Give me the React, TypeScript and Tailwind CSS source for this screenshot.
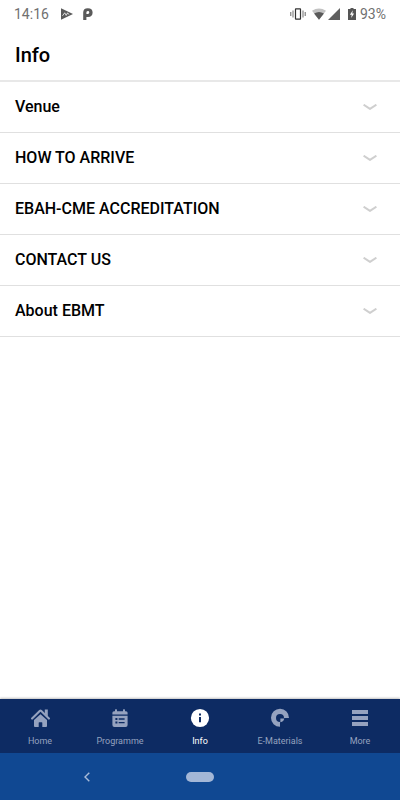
import { useState } from 'react';
import type { ReactNode } from 'react';
import clsx from 'clsx';

const sections = ['Venue', 'HOW TO ARRIVE', 'EBAH-CME ACCREDITATION', 'CONTACT US', 'About EBMT'];

function HomeIcon() {
  return (
    <svg viewBox="0 0 20 20" className="size-5" fill="currentColor" aria-hidden="true">
      <path d="M10.5 6.2 4 12v6.1q0 .9.9.9h3.8v-4.2q0-.6.6-.6h2.4q.6 0 .6.6V19h3.8q.9 0 .9-.9V12z" />
      <path d="m2.1 10.6 7.6-7.6q.8-.7 1.6 0l7.6 7.6" fill="none" stroke="currentColor" strokeWidth="2.1" strokeLinecap="round" />
      <path d="M14.8 1.6h3v7l-3-3z" />
    </svg>
  );
}

function ProgrammeIcon() {
  return (
    <svg viewBox="0 0 20 20" className="size-5" fill="currentColor" aria-hidden="true">
      <path d="M2.4 6.6V4.8q0-1.6 1.6-1.6h1V1.8q0-.6.6-.6h.8q.6 0 .6.6v1.4h6V1.8q0-.6.6-.6h.8q.6 0 .6.6v1.4h1q1.6 0 1.6 1.6v1.8z" />
      <path
        fillRule="evenodd"
        d="M2.4 7.8h15.2v9.1q0 2-2 2H4.4q-2 0-2-2zM5.4 10v2h2v-2zm3.3.3v1.4h5.9v-1.4zM5.4 13.6v2h2v-2zm3.3.3v1.4h5.9v-1.4z"
      />
    </svg>
  );
}

function InfoIcon() {
  return (
    <svg viewBox="0 0 20 20" className="size-5" aria-hidden="true">
      <circle cx="10" cy="10" r="9.1" fill="currentColor" />
      <path d="M9 5.6h2v2H9zM9 8.9h2v5.4H9z" fill="#0d2b63" />
    </svg>
  );
}

function MaterialsIcon() {
  return (
    <svg viewBox="0 0 20 20" className="size-5" fill="currentColor" aria-hidden="true">
      <path d="M19 10A9 9 0 1 0 10 18.8V14A4 4 0 1 1 14 10z" />
      <path d="M10.4 10.6h3.9q-.4 3-3.9 3.7z" />
    </svg>
  );
}

function MoreIcon() {
  return (
    <svg viewBox="0 0 20 20" className="size-5" fill="currentColor" aria-hidden="true">
      <path d="M2 2h16v4H2zM2 8h16v4H2zM2 14h16v4H2z" />
    </svg>
  );
}

const tabs: { label: string; icon: ReactNode }[] = [
  { label: 'Home', icon: <HomeIcon /> },
  { label: 'Programme', icon: <ProgrammeIcon /> },
  { label: 'Info', icon: <InfoIcon /> },
  { label: 'E-Materials', icon: <MaterialsIcon /> },
  { label: 'More', icon: <MoreIcon /> },
];

function StatusBar() {
  return (
    <div className="flex h-7 items-center px-3.5 text-sm text-[#707070]">
      <span>14:16</span>
      <svg viewBox="0 0 12 12" className="ml-3 size-3" aria-hidden="true">
        <path d="M0 .3 12 6 0 11.7z" fill="#5a5a5a" />
        <path d="m1.5 7.8 2.2-3 1.5 2.6 1.4-2.6 1.3 1.8" fill="none" stroke="#fff" strokeWidth=".8" />
      </svg>
      <svg viewBox="0 0 12 12" className="ml-2.5 size-3" aria-hidden="true">
        <path
          fillRule="evenodd"
          d="M.2 12V4.6Q.2.2 4.8.2 9.6.2 9.6 4.5T5 9H3.4v3zM3.4 5.9h1.5q1.4 0 1.4-1.4T4.8 3.1 3.4 4.6z"
          fill="#5a5a5a"
        />
      </svg>
      <div className="ml-auto flex items-center">
        <svg viewBox="0 0 16 12" className="h-3 w-4" fill="none" aria-hidden="true">
          <rect x="5.5" y=".9" width="5" height="10.2" rx=".4" stroke="#333" strokeWidth="1.2" />
          <path d="M3 2.5v7M13 2.5v7" stroke="#888" strokeWidth="1.2" />
          <path d="M.8 4v4M15.2 4v4" stroke="#666" strokeWidth="1" />
        </svg>
        <svg viewBox="0 0 14 12" className="ml-1.5 h-3 w-3.5" aria-hidden="true">
          <path d="M0 2.8Q7-2 14 2.8L7 11.8z" fill="#c2c2c2" />
          <path d="M2.1 5.4Q7 2.4 11.9 5.4L7 11.8z" fill="#5a5a5a" />
        </svg>
        <svg viewBox="0 0 12 12" className="ml-0.5 size-3" aria-hidden="true">
          <path d="M12 0v12H0z" fill="#5f5f5f" />
        </svg>
        <svg viewBox="0 0 8 12" className="ml-2 h-3 w-2" aria-hidden="true">
          <path d="M2.5 0h3v1H8v11H0V1h2.5z" fill="#555" />
          <path d="M4.8 2.3 1.9 6.8h1.8L3.2 10l2.9-4.6H4.3z" fill="#fff" />
        </svg>
        <span className="ml-1">93%</span>
      </div>
    </div>
  );
}

export default function App() {
  const [active, setActive] = useState('Info');

  return (
    <div className="flex min-h-screen flex-col bg-white font-['Roboto',sans-serif] text-black">
      <header className="border-b-2 border-[#e8e8e8]">
        <StatusBar />
        <h1 className="flex h-[52px] items-center px-[15px] pt-px text-xl font-medium">Info</h1>
      </header>

      <main className="flex-1">
        <ul className="divide-y divide-[#e0e0e0] border-b border-[#e0e0e0]">
          {sections.map(section => (
            <li key={section}>
              <button type="button" className="flex h-[50px] w-full items-center justify-between pr-[23px] pl-[15px] text-left text-base font-medium">
                {section}
                <svg viewBox="0 0 14 6" className="h-1.5 w-3.5" fill="none" aria-hidden="true">
                  <path d="m.6.7 6.4 4.2L13.4.7" stroke="#cfcfcf" strokeWidth="2" />
                </svg>
              </button>
            </li>
          ))}
        </ul>
      </main>

      <nav className="grid h-[54px] grid-cols-5 bg-[#0d2b63] shadow-[0_-1px_2px_#00000040]">
        {tabs.map(({ label, icon }) => (
          <button
            key={label}
            type="button"
            onClick={() => setActive(label)}
            className={clsx(
              'flex flex-col items-center gap-[7px] pt-[9px] text-[9px] leading-3',
              active === label ? 'text-white' : 'text-[#95a2bf]'
            )}
          >
            {icon}
            {label}
          </button>
        ))}
      </nav>

      <div className="grid h-[47px] grid-cols-[1fr_28px_1fr] items-center bg-[#104892]">
        <button type="button" aria-label="Back" className="justify-self-center pr-3 text-[#a8bbd9]">
          <svg viewBox="0 0 8 12" className="h-3 w-2" fill="none" aria-hidden="true">
            <path d="M6.3 1.8 2 6l4.3 4.2" stroke="currentColor" strokeWidth="1.4" />
          </svg>
        </button>
        <button type="button" aria-label="Home screen" className="h-2.5 rounded-full bg-[#a3b7d7]" />
      </div>
    </div>
  );
}
